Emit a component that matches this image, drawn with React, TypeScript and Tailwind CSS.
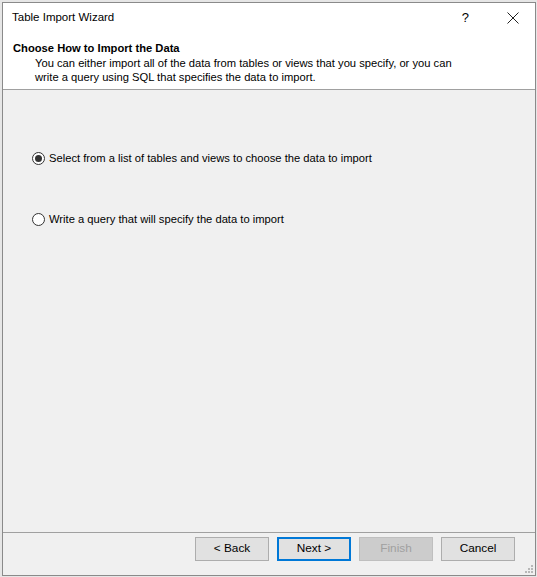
import React from "react";

const font = { fontFamily: '"Liberation Sans", Arial, sans-serif' };

function Radio({ checked }: { checked: boolean }) {
  return (
    <span className="relative inline-flex h-[13px] w-[13px] shrink-0 items-center justify-center rounded-full border border-[#333333] bg-white">
      {checked && <span className="h-[7px] w-[7px] rounded-full bg-[#333333]" />}
    </span>
  );
}

function Btn({ label, primary, disabled }: { label: string; primary?: boolean; disabled?: boolean }) {
  const base = "flex h-[24px] w-[74px] items-center justify-center text-[11.8px]";
  if (primary)
    return <div className={`${base} border-2 border-[#0078d7] bg-[#e1e1e1] text-black`}>{label}</div>;
  if (disabled)
    return <div className={`${base} border border-[#bfbfbf] bg-[#cccccc] text-[#a0a0a0]`}>{label}</div>;
  return <div className={`${base} border border-[#adadad] bg-[#e1e1e1] text-black`}>{label}</div>;
}

export default function App() {
  return (
    <div className="h-[577px] w-[537px] bg-[#e6e6e6] pl-[2px] pr-[1px] pt-[2px] pb-[1px]" style={font}>
      <div className="flex h-full w-full flex-col border border-[#8a8a8a] bg-[#f0f0f0] text-black">
        <div className="flex flex-col bg-white">
          <div className="flex h-[29px] items-center pl-[9px] pr-[14px] text-[11.5px]">
            <span className="flex-1">Table Import Wizard</span>
            <span className="mr-[38px] text-[13px]">?</span>
            <svg width="12" height="12" viewBox="0 0 12 12" className="mr-[2px]">
              <path d="M0.5 0.5 L11.5 11.5 M11.5 0.5 L0.5 11.5" stroke="#222" strokeWidth="1" />
            </svg>
          </div>
          <div className="h-[57px] pl-[10px] pt-[9px] text-[11.2px] leading-[14px]">
            <div className="font-bold">Choose How to Import the Data</div>
            <div className="pl-[22px] pt-[1px]">
              You can either import all of the data from tables or views that you specify, or you can
              <br />
              write a query using SQL that specifies the data to import.
            </div>
          </div>
        </div>
        <div className="h-px bg-[#a0a0a0]" />
        <div className="flex flex-1 flex-col pl-[29px] pt-[61px] text-[11.2px]">
          <div className="flex h-[14px] items-center gap-[4px]">
            <Radio checked />
            <span>Select from a list of tables and views to choose the data to import</span>
          </div>
          <div className="mt-[47px] flex h-[14px] items-center gap-[4px]">
            <Radio checked={false} />
            <span>Write a query that will specify the data to import</span>
          </div>
        </div>
        <div className="h-px bg-[#a0a0a0]" />
        <div className="relative flex h-[42px] justify-end gap-[8px] pr-[20px] pt-[4px]">
          <Btn label="< Back" />
          <Btn label="Next >" primary />
          <Btn label="Finish" disabled />
          <Btn label="Cancel" />
          <svg width="10" height="10" viewBox="0 0 10 10" className="absolute bottom-[1px] right-[1px]">
            {[
              [7, 1], [4, 4], [7, 4], [1, 7], [4, 7], [7, 7],
            ].map(([x, y], i) => (
              <rect key={i} x={x} y={y} width="2" height="2" fill="#b8b8b8" />
            ))}
          </svg>
        </div>
      </div>
    </div>
  );
}
